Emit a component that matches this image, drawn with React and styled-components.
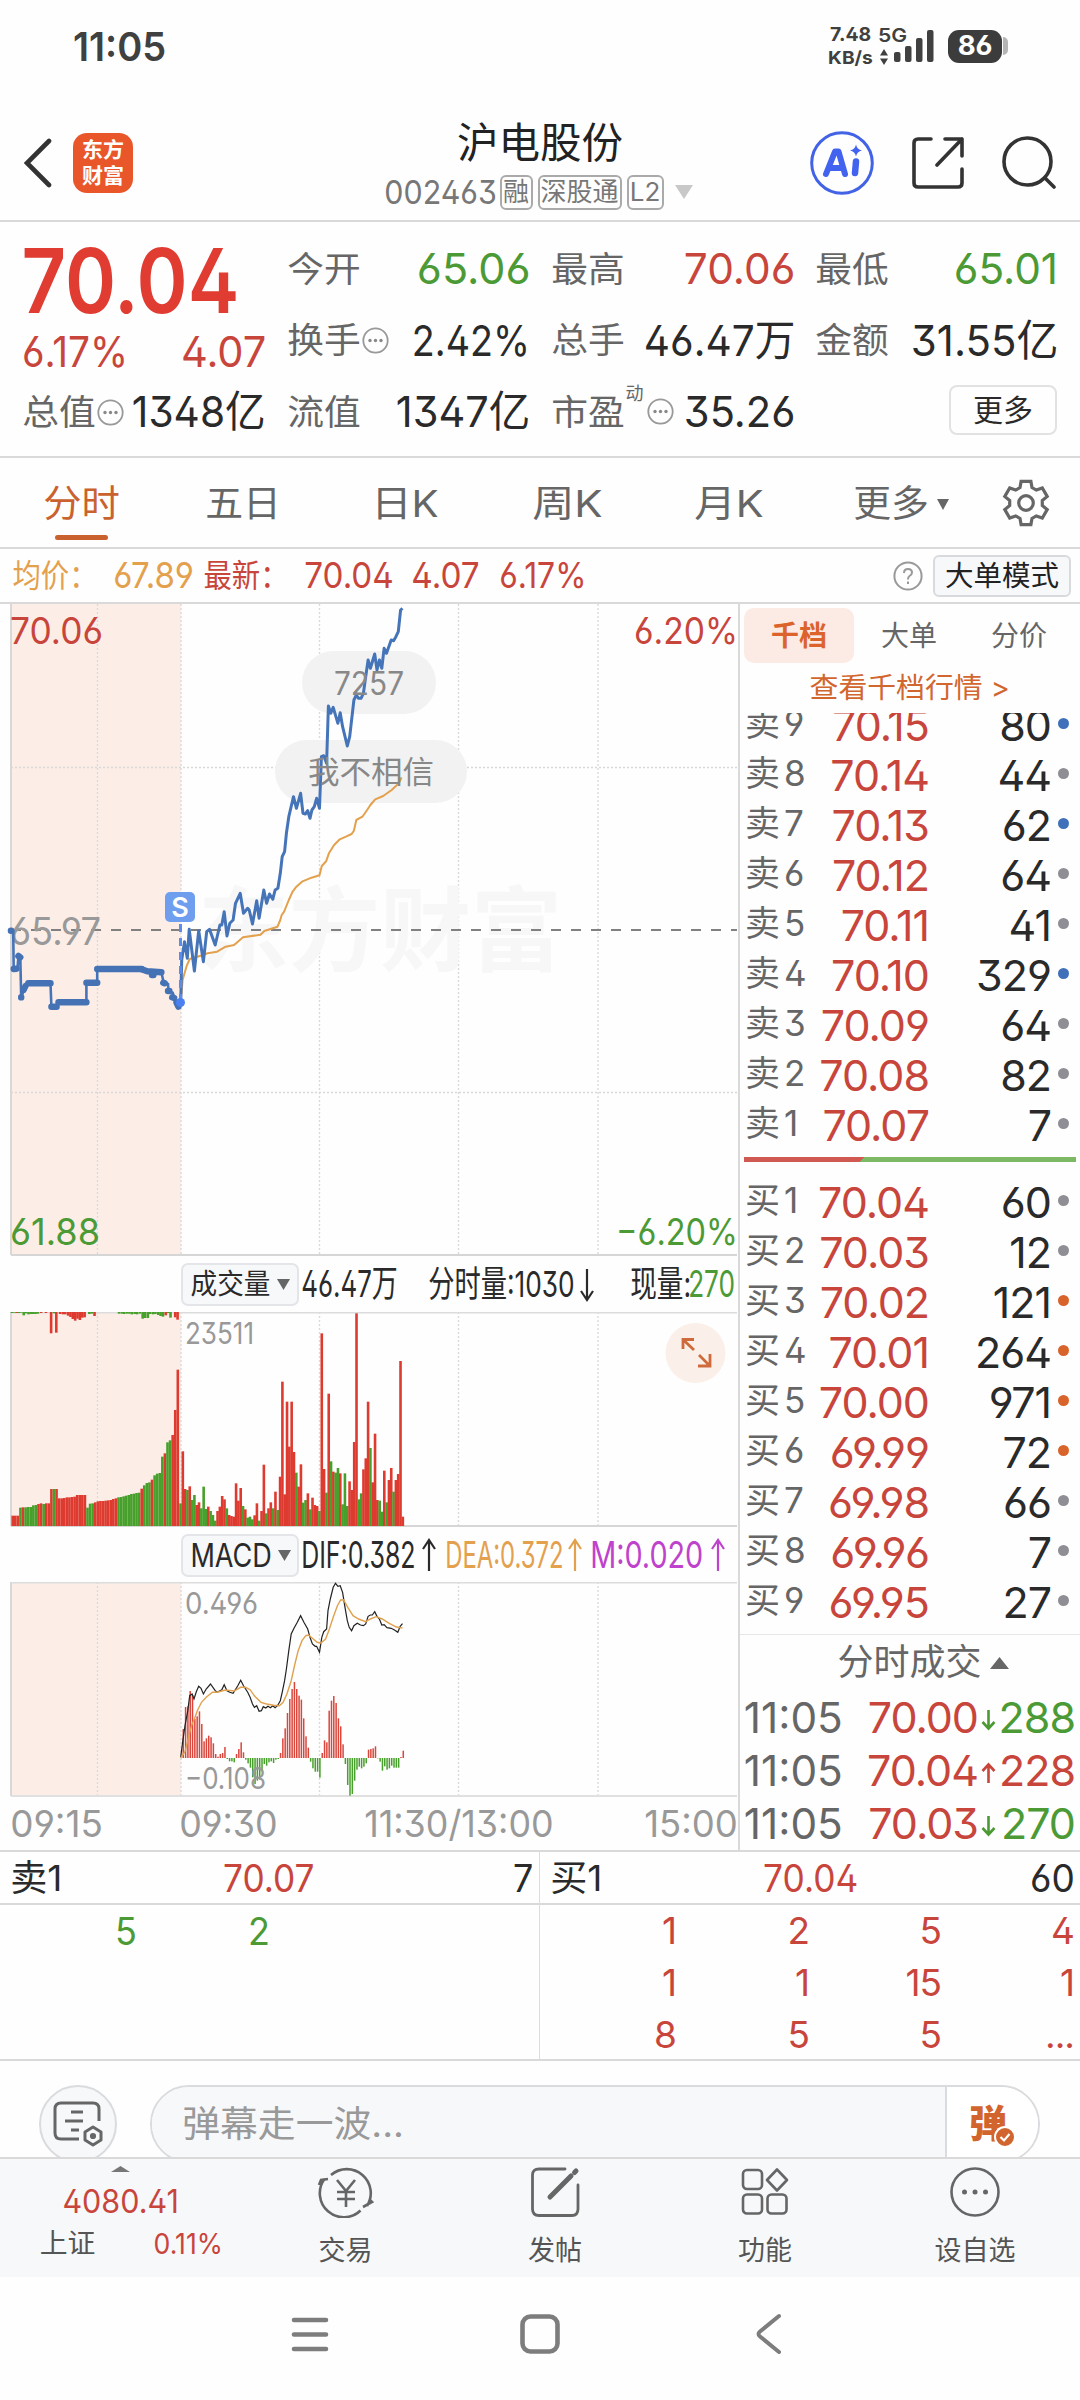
import React, { useLayoutEffect, useRef, useState } from "react";
import styled, { createGlobalStyle } from "styled-components";

const RED = "#c8453c";
const GREEN = "#4c9a35";
const ORANGE = "#c9622f";
const GREY = "#666666";
const INK = "#2a2a2a";
const LINE = "#d9d9d9";
const FONT = `Inter, "Noto Sans CJK SC", sans-serif`;

const Global = createGlobalStyle`
  * { box-sizing: border-box; }
  body { margin: 0; background: #fefefe; }
  svg { display: block; flex: none; }
`;

const Page = styled.div`
  width: 1080px;
  height: 2400px;
  overflow: hidden;
  display: flex;
  flex-direction: column;
  background: #fefefe;
  font-family: ${FONT};
  font-feature-settings: "ss01" 1;
  font-weight: 380;
  color: ${INK};
  line-height: 1;
`;

/* Text squeezed or stretched horizontally to a given width */
const FitBox = styled.span`
  display: block;
  flex: none;
  width: ${(p) => p.$w}px;
  margin-left: ${(p) => p.$ml || 0}px;
  margin-top: ${(p) => p.$mt || 0}px;
  font-size: ${(p) => p.$s}px;
  font-weight: ${(p) => p.$b || 380};
  color: ${(p) => p.$c || "inherit"};
  white-space: nowrap;
  line-height: 1.1;
`;
const FitInner = styled.span`
  display: inline-block;
  transform-origin: 0 50%;
`;
function Fit({ w, s, c, b, ml, mt, children }) {
  const ref = useRef(null);
  const [k, setK] = useState(1);
  useLayoutEffect(() => {
    setK((w + s * 0.1) / ref.current.offsetWidth);
  }, [w, s]);
  return (
    <FitBox $w={w} $s={s} $c={c} $b={b} $ml={ml} $mt={mt}>
      <FitInner ref={ref} style={{ transform: `translateX(${-s * 0.05}px) scaleX(${k})` }}>
        {children}
      </FitInner>
    </FitBox>
  );
}

const Text = styled.span`
  font-size: ${(p) => p.$s}px;
  color: ${(p) => p.$c || "inherit"};
  font-weight: ${(p) => p.$b || 380};
  letter-spacing: ${(p) => p.$ls || 0}px;
  white-space: nowrap;
  line-height: 1.1;
`;

/* ---------- status bar ---------- */
const StatusBar = styled.div`
  height: 92px;
  padding: 1px 72px 0 75px;
  display: flex;
  justify-content: space-between;
  align-items: center;
  color: #404040;
`;
const StatusRight = styled.div`
  display: flex;
  align-items: center;
  margin-top: -1px;
`;
const Speed = styled.div`
  display: flex;
  flex-direction: column;
  gap: 2px;
  margin-right: 7px;
`;
const NetKind = styled.div`
  display: flex;
  flex-direction: column;
  gap: 2px;
`;
const SignalBars = styled.svg`
  margin-left: -13px;
`;
const Battery = styled.div`
  width: 54px;
  height: 33px;
  margin-left: 14px;
  border-radius: 11px;
  background: #3c3c3c;
  color: #fff;
  display: flex;
  align-items: center;
  justify-content: center;
`;
const BatteryTip = styled.div`
  width: 5px;
  height: 18px;
  margin-left: 1px;
  border-radius: 0 5px 5px 0;
  background: #b5b5b5;
`;

/* ---------- header ---------- */
const Header = styled.header`
  height: 130px;
  border-bottom: 2px solid ${LINE};
  padding: 13px 24px 0 24px;
  display: flex;
  align-items: center;
  justify-content: space-between;
`;
const HeaderSide = styled.div`
  width: 300px;
  display: flex;
  align-items: center;
  justify-content: ${(p) => (p.$end ? "flex-end" : "flex-start")};
  gap: ${(p) => p.$gap}px;
`;
const Logo = styled.div`
  width: 60px;
  height: 60px;
  border-radius: 14px;
  background: #e9562a;
  color: #fff;
  display: flex;
  flex-direction: column;
  align-items: center;
  justify-content: center;
  font-weight: 700;
  font-size: 21px;
  line-height: 26px;
`;
const TitleBlock = styled.div`
  display: flex;
  flex-direction: column;
  align-items: center;
  gap: 8px;
  margin-top: 6px;
`;
const CodeRow = styled.div`
  display: flex;
  align-items: center;
  gap: 5px;
  margin-left: -2px;
  color: #777;
`;
const Tag = styled.span`
  height: 35px;
  width: ${(p) => p.$w}px;
  border: 2px solid #aaa;
  border-radius: 6px;
  font-size: 26px;
  display: flex;
  align-items: center;
  justify-content: center;
  white-space: nowrap;
`;
const Caret = styled.div`
  margin-left: 6px;
`;

/* ---------- quote summary ---------- */
const Quote = styled.section`
  height: 236px;
  border-bottom: 2px solid ${LINE};
  padding: 11px 22px 0 24px;
  display: flex;
  gap: 25px;
`;
const QuoteLeft = styled.div`
  width: 240px;
  display: flex;
  flex-direction: column;
`;
const QuoteLine = styled.div`
  height: ${(p) => p.$h}px;
  display: flex;
  align-items: center;
  justify-content: space-between;
`;
const Stats = styled.div`
  display: grid;
  grid-template-columns: 239px 240px 239px;
  grid-template-rows: repeat(3, 71.5px);
  column-gap: 24.5px;
`;
const Stat = styled.div`
  display: flex;
  align-items: center;
  justify-content: space-between;
`;
const StatLabel = styled.div`
  display: flex;
  align-items: center;
  gap: 3px;
  color: ${GREY};
`;
const Sup = styled.span`
  font-size: 18px;
  align-self: flex-start;
  margin: -8px 0 0 0;
`;
const MoreButton = styled.div`
  width: 108px;
  height: 50px;
  margin: 9px -1px 0 auto;
  border: 2px solid #e2e2e2;
  border-radius: 8px;
  display: flex;
  align-items: center;
  justify-content: center;
`;

/* ---------- period tabs ---------- */
const Tabs = styled.nav`
  height: 91px;
  border-bottom: 2px solid ${LINE};
  display: flex;
`;
const Tab = styled.div`
  width: 162px;
  padding-top: 26px;
  padding-left: ${(p) => p.$pl || 0}px;
  display: flex;
  flex-direction: column;
  align-items: center;
  gap: 10px;
  color: ${(p) => (p.$on ? ORANGE : GREY)};
`;
const TabName = styled.div`
  display: flex;
  align-items: center;
  gap: 10px;
`;
const TabMark = styled.div`
  width: 53px;
  height: 5px;
  border-radius: 3px;
  background: ${ORANGE};
`;
const GearCell = styled.div`
  width: 108px;
  display: flex;
  align-items: center;
  justify-content: center;
`;

/* ---------- info line ---------- */
const Info = styled.div`
  height: 55px;
  border-bottom: 2px solid ${LINE};
  padding: 1px 9px 0 14px;
  display: flex;
  align-items: center;
`;
const Spring = styled.div`
  flex: 1;
`;
const ModeButton = styled.div`
  width: 138px;
  height: 42px;
  margin-left: 10px;
  border: 2px solid #d8dadd;
  border-radius: 6px;
  background: #f7f8fa;
  display: flex;
  align-items: center;
  justify-content: center;
`;

/* ---------- body ---------- */
const Body = styled.main`
  height: 1248px;
  border-bottom: 2px solid ${LINE};
  display: flex;
`;
const ChartCol = styled.div`
  width: 740px;
  border-right: 2px solid ${LINE};
  display: flex;
  flex-direction: column;
`;
const IndicatorBar = styled.div`
  height: ${(p) => p.$h}px;
  padding: 2px 0 0 181px;
  display: flex;
  align-items: center;
`;
const Picker = styled.div`
  width: 118px;
  height: 43px;
  border: 2px solid #e3e5e8;
  border-radius: 7px;
  background: #f7f8fa;
  display: flex;
  align-items: center;
  padding-left: 9px;
  gap: 8px;
`;
const TimeAxis = styled.div`
  height: 53px;
  padding: 2px 0 0 12px;
  display: flex;
  align-items: center;
  color: #999;
`;

const BookCol = styled.aside`
  width: 340px;
  display: flex;
  flex-direction: column;
`;
const BookTabs = styled.div`
  padding: 4px 4px 0;
  display: flex;
`;
const BookTab = styled.div`
  width: 110px;
  height: 55px;
  border-radius: 10px;
  background: ${(p) => (p.$on ? "#fbebe4" : "transparent")};
  color: ${(p) => (p.$on ? "#dc632c" : GREY)};
  font-size: 28px;
  font-weight: ${(p) => (p.$on ? 700 : 380)};
  display: flex;
  align-items: center;
  justify-content: center;
`;
const BookLink = styled.div`
  height: 52px;
  padding: 0 2px 0 0;
  color: #d2662f;
  display: flex;
  align-items: center;
  justify-content: center;
`;
const SellList = styled.div`
  height: 444px;
  flex: none;
  overflow: hidden;
  display: flex;
  flex-direction: column;
  justify-content: flex-end;
  padding-bottom: 6px;
`;
const BuyList = styled.div`
  padding-top: 16px;
  height: 472px;
  flex: none;
`;
const Level = styled.div`
  height: 50px;
  flex: none;
  display: flex;
  align-items: center;
  padding: 0 11px 0 5px;
`;
const LevelName = styled.div`
  width: 65px;
  font-size: 35px;
  margin-top: -5px;
  color: ${GREY};
  display: flex;
  align-items: center;
  gap: 4px;
`;
const PriceCell = styled.div`
  width: 118px;
  display: flex;
  justify-content: flex-end;
`;
const QtyCell = styled.div`
  flex: 1;
  display: flex;
  justify-content: flex-end;
`;
const Num = styled.span`
  font-size: ${(p) => p.$s || 43}px;
  letter-spacing: ${(p) => p.$ls ?? -1}px;
  margin-right: ${(p) => p.$ls ?? -1}px;
  color: ${(p) => p.$c || INK};
  line-height: 1.1;
`;
const Dot = styled.i`
  width: 11px;
  height: 11px;
  margin: -6px 0 0 8px;
  border-radius: 50%;
  background: ${(p) => p.$c};
`;
const Balance = styled.div`
  height: 5px;
  flex: none;
  margin: 0 4px 0 4px;
  background: linear-gradient(135deg, #d05a52 0 85px, #7db965 85.5px);
`;
const TradesHead = styled.div`
  height: 57px;
  flex: none;
  border-top: 1px solid #e6e6e6;
  display: flex;
  align-items: center;
  justify-content: center;
  padding-left: 26px;
  gap: 8px;
  color: ${GREY};
`;
const Trade = styled.div`
  height: 53px;
  flex: none;
  display: flex;
  align-items: center;
  padding: 0 6px 0 6px;
`;
const TradePrice = styled.div`
  flex: 1;
  display: flex;
  justify-content: flex-end;
`;
const TradeQty = styled.div`
  width: 78px;
  display: flex;
  justify-content: flex-end;
`;

/* ---------- queue table ---------- */
const Queues = styled.section`
  height: 209px;
  border-bottom: 2px solid ${LINE};
  display: flex;
`;
const Queue = styled.div`
  width: 540px;
  border-right: ${(p) => (p.$line ? "1px solid #dcdcdc" : "none")};
`;
const QueueHead = styled.div`
  height: 53px;
  border-bottom: 2px solid ${LINE};
  padding: 2px 7px 0 12px;
  display: grid;
  grid-template-columns: 213px 92px 1fr;
  align-items: center;
`;
const QueueRow = styled.div`
  height: 52px;
  padding: 1px 7px 0 0;
  display: grid;
  grid-template-columns: 135px 133px 132px 133px;
  align-items: center;
  justify-items: end;
`;
const Right = styled.div`
  justify-self: end;
`;

/* ---------- comment input ---------- */
const Compose = styled.section`
  height: 96px;
  overflow: hidden;
  padding: 24px 40px 0 39px;
  display: flex;
  gap: 33px;
`;
const RoundButton = styled.div`
  width: 78px;
  height: 78px;
  flex: none;
  border: 2px solid #d9dbde;
  border-radius: 50%;
  background: #f7f8fa;
  display: flex;
  align-items: center;
  justify-content: center;
`;
const Pill = styled.div`
  flex: 1;
  height: 78px;
  border: 2px solid #d9dbde;
  border-radius: 40px;
  overflow: hidden;
  display: flex;
`;
const PillText = styled.div`
  flex: 1;
  background: #f7f8fa;
  padding: 1px 0 0 32px;
  display: flex;
  align-items: center;
  color: #999;
`;
const Danmu = styled.div`
  width: 93px;
  border-left: 2px solid #d9dbde;
  background: #fff;
  padding: 0 0 0 22px;
  display: flex;
  align-items: center;
  color: #d2642e;
`;
const DanmuBadge = styled.div`
  margin: 26px 0 0 -13px;
`;

/* ---------- bottom bars ---------- */
const Bottom = styled.footer`
  height: 120px;
  flex: none;
  background: #f7f8fa;
  border-top: 2px solid ${LINE};
  display: flex;
`;
const IndexCell = styled.div`
  width: 241px;
  padding-top: 7px;
  display: flex;
  flex-direction: column;
  align-items: center;
`;
const IndexRow = styled.div`
  width: 180px;
  margin: 9px 0 0 21px;
  display: flex;
  justify-content: space-between;
  align-items: center;
  color: #555;
`;
const Action = styled.div`
  width: ${(p) => p.$w}px;
  padding-top: 7px;
  display: flex;
  flex-direction: column;
  align-items: center;
  gap: 18px;
  color: #555;
`;
const SystemNav = styled.div`
  flex: 1;
  display: flex;
  justify-content: center;
  gap: 190px;
  padding-top: 34px;
`;

/* ---------- small drawings ---------- */
const Tri = ({ w, h, c, up }) => (
  <svg width={w} height={h} viewBox="0 0 10 10" preserveAspectRatio="none">
    <path d={up ? "M0 10L5 0L10 10Z" : "M0 0H10L5 10Z"} fill={c} />
  </svg>
);
const Dots3 = () => (
  <svg width="27" height="27" viewBox="0 0 27 27">
    <circle cx="13.5" cy="13.5" r="12.2" fill="none" stroke="#999" strokeWidth="1.8" />
    <g fill="#888">
      <circle cx="8" cy="13.5" r="1.7" />
      <circle cx="13.5" cy="13.5" r="1.7" />
      <circle cx="19" cy="13.5" r="1.7" />
    </g>
  </svg>
);
const TickArrow = ({ up }) => (
  <svg width="15" height="22" viewBox="0 0 15 22" fill="none" strokeWidth="2.6" stroke={up ? RED : GREEN}>
    <path d={up ? "M7.5 21V3M1.5 9L7.5 2.5L13.5 9" : "M7.5 1V19M1.5 13L7.5 19.5L13.5 13"} />
  </svg>
);
const LongArrow = ({ up, c }) => (
  <svg width="14" height="34" viewBox="0 0 14 34" fill="none" stroke={c} strokeWidth="2.2">
    <path d={up ? "M7 33V3M1 11L7 2L13 11" : "M7 1V31M1 23L7 32L13 23"} />
  </svg>
);
const GEAR = [0, 1, 2, 3, 4, 5]
  .flatMap((n) => {
    const a = (n * Math.PI) / 3;
    return [[-6, -15.4], [-4.9, -21.6], [4.9, -21.6], [6, -15.4]].map(
      ([x, y]) =>
        `${(24 + x * Math.cos(a) - y * Math.sin(a)).toFixed(1)} ${(24 + x * Math.sin(a) + y * Math.cos(a)).toFixed(1)}`
    );
  })
  .join("L");
const Gear = () => (
  <svg width="48" height="48" viewBox="0 0 48 48" fill="none" stroke="#666" strokeWidth="3.2">
    <path d={`M${GEAR}Z`} />
    <circle cx="24" cy="24" r="7.3" />
  </svg>
);

/* ---------- chart data ---------- */
const KX = 0.4719;
const toPath = (pts, dy) => {
  const n = pts.trim().split(/\s+/).map((p) => p.split(",").map(Number));
  return n.map(([x, y], i) => `${i ? "L" : "M"}${(x * KX).toFixed(1)} ${(y / 3 - dy).toFixed(1)}`).join("");
};
const AUCTION_LINE =
  "23,1022 28,1024 29,1137 37,1135 39,1100 43,1105 45,1222 52,1195 58,1180 107,1180 109,1250 120,1250 124,1237 183,1237 183,1178 206,1178 206,1137 300,1137 320,1145 324,1155 342,1147 347,1178 356,1182 357,1203 366,1208 370,1225 378,1250 383,1237";
const AUCTION_DOTS = [
  "23,1022 24,1022", "29,1137 35,1136", "39,1098 43,1102", "45,1222 45,1222.1", "50,1200 54,1188", "60,1180 107,1180",
  "109,1250 120,1250", "124,1237 183,1237", "183,1178 206,1178", "206,1137 300,1137", "300,1138 312,1144 342,1147",
  "322,1155 325,1155", "346,1178 349,1180", "356,1203 359,1203", "365,1222 369,1224", "374,1238 378,1250",
];
const PRICE_LINE =
  "383,1237 385,1110 391,1055 397,1105 401,1018 412,1143 421,1022 431,1115 438,1025 444,1018 456,1065 466,1005 470,1005 475,965 481,1038 487,1000 494,990 499,940 509,910 516,970 525,955 528,960 535,1002 544,932 549,985 559,900 565,940 571,912 578,928 583,900 589,895 594,850 598,800 603,785 607,730 612,680 622,620 628,655 637,610 642,670 647,672 652,662 657,685 661,660 666,650 671,625 677,655 681,500 686,497 692,520 696,348 701,370 706,352 716,400 721,368 726,410 736,468 741,440 750,330 755,315 760,325 765,325 770,310 775,260 780,210 785,235 794,192 799,240 804,210 809,235 814,175 819,190 829,150 834,152 839,140 844,125 849,60 853,55";
const AVG_LINE =
  "383,1237 387,1170 395,1130 402,1107 425,1097 440,1090 460,1085 478,1070 496,1065 515,1042 552,1034 560,1023 588,1010 594,990 597,975 602,965 612,930 620,905 628,890 640,875 660,863 677,856 682,828 691,814 697,790 708,765 720,748 733,740 745,732 750,722 755,690 768,680 778,660 785,645 795,628 812,618 830,600 845,580 851,562";
const DIF_LINE =
  "383,685 387,640 392,590 398,545 402,500 407,495 411,510 416,488 421,472 426,478 431,495 437,480 446,465 456,485 460,490 470,482 475,467 481,485 487,490 494,493 504,470 510,454 516,470 525,490 530,505 535,525 539,535 544,530 549,547 554,545 558,533 563,537 568,532 573,536 578,530 583,536 588,530 594,515 598,490 603,455 607,420 612,365 617,315 623,298 630,280 637,260 644,280 652,300 657,325 662,345 668,352 671,352 677,370 682,325 686,308 692,300 695,245 700,210 706,175 711,163 716,172 721,170 726,190 731,235 736,275 740,295 745,305 750,290 757,283 764,288 770,290 775,285 780,262 785,258 789,258 794,248 799,262 804,270 809,288 814,287 820,296 829,298 836,303 843,310 848,292 853,284";
const DEA_LINE =
  "383,687 392,668 397,640 402,610 407,585 412,570 418,545 427,520 437,505 450,490 460,490 478,483 496,486 510,475 520,475 530,482 540,502 553,520 565,525 580,529 592,530 600,520 608,495 617,455 625,405 632,365 640,335 648,320 654,318 662,328 672,340 680,342 690,330 698,300 706,265 715,230 722,213 728,212 737,235 748,260 760,270 775,278 785,270 797,263 810,270 825,283 840,294 853,297";

/* colour letter followed by the bar's top */
const PRE_VOL =
  "r797 r797 r797 g773 r772 g772 g771 g771 g766 g765 r762 r760 g762 r760 r760 r717 g717 r717 r745 r745 r744 r742 r742 r741 r740 r735 r735 r735 r735 g773 g761 g760 r757 r754 r753 r753 r752 r751 r750 r747 r745 g742 g741 g739 g737 g735 g732 g731 g729 g728 r716 g706 g699 g697 r689 g676 g671 g669 g620 r610 g577 g571 r555 r480 r359";
const VOL =
  "g760 r604 r717 g720 r709 g750 g735 r765 r757 g775 g710 g777 r770 g783 g795 g812 r783 r770 r738 r748 g775 r795 r798 r800 r700 r752 r714 g768 r778 g803 g800 g808 r796 r760 g812 r783 r644 g790 r775 r757 g775 r725 g780 r680 r395 r733 r455 r590 r455 r606 g668 r710 r643 g758 g750 r730 g778 r743 r765 r768 g783 r250 r657 g728 r431 g634 r665 g668 g654 r670 g763 g670 g768 r694 r720 r576 r190 g748 g730 r658 r625 r455 g594 r697 r551 r750 g752 g785 r662 g757 r690 r654 g725 r690 r672 r333 r800";
const TOP_VOL =
  "23g189 28g188 33r189 38g189 43g188 48g196 53g190 58g193 63g192 68g192 73g192 78g191 85r189 95r189 106r250 112g190 117r248 125r192 131r193 136r193 142r197 147r201 152r207 157r212 162r206 167r210 172r203 177r202 187g192 192g191 198r198 250g191 256g191 261g192 267g191 272g191 277g193 283g192 288g193 294g191 300g206 305g204 311g204 316g192 322g193 327g192 333g195 338g198 343g200 349r196 354g189 359g203 369r202 374r209";
const MACD =
  "687 600 534 532 486 498 570 562 547 585 637 628 620 625 643 675 683 675 672 654 690 697 697 700 675 660 640 670 692 703 716 745 765 755 752 725 705 710 700 697 702 692 690 672 628 598 552 510 480 459 480 500 512 568 622 656 698 718 728 728 746 672 634 640 545 515 501 522 568 592 646 705 768 800 795 755 722 713 718 713 703 662 660 658 652 688 698 725 712 722 718 710 716 716 716 684 665";
const hue = (k) => (k === "r" ? "#de3b30" : "#48a02c");

const Grid = ({ h }) => (
  <g>
    <rect x="11" y="0" width="170" height={h} fill="#fceee7" />
    <path d={`M11 0V${h}`} stroke="#d8d8d8" strokeWidth="2" />
    <path
      d={`M97.5 0V${h}M181 0V${h}M319.5 0V${h}M458.5 0V${h}M598 0V${h}`}
      stroke="#dadada"
      strokeWidth="1.4"
      strokeDasharray="2 2"
    />
  </g>
);
const SvgText = ({ x, y, w, s, c, children, ...rest }) => (
  <text x={x} y={y} textLength={w} lengthAdjust="spacingAndGlyphs" fontSize={s} fill={c} {...rest}>
    {children}
  </text>
);

const PriceChart = () => (
  <svg width="738" height="652">
    <Grid h={651} />
    <path d="M11 163.5H737M11 488.5H737" stroke="#d8d8d8" strokeWidth="1.4" strokeDasharray="2 2" />
    <path d="M11 651H737" stroke="#d6d6d6" strokeWidth="2" />
    <SvgText x="198" y="360" w="364" s="92" c="#f7f7f7" fontWeight="700">东方财富</SvgText>
    <path d="M11 326H737" stroke="#808080" strokeWidth="2" strokeDasharray="10 10" />
    <SvgText x="10" y="340.5" w="91" s="38" c="#999">65.97</SvgText>
    <SvgText x="10" y="39.5" w="93" s="37" c={RED}>70.06</SvgText>
    <SvgText x="634" y="39.5" w="104" s="37" c={RED}>6.20%</SvgText>
    <SvgText x="10" y="641" w="90" s="37" c={GREEN}>61.88</SvgText>
    <SvgText x="616" y="641" w="122" s="37" c={GREEN}>−6.20%</SvgText>
    <rect x="302" y="47" width="134" height="63" rx="31.5" fill="#f2f2f2" />
    <rect x="275" y="136" width="192" height="63" rx="31.5" fill="#f2f2f2" />
    <path d={toPath(AVG_LINE, 14)} fill="none" stroke="#e3a04d" strokeWidth="2" strokeLinejoin="round" />
    <path d={toPath(AUCTION_LINE, 14)} fill="none" stroke="#4574b8" strokeWidth="2.6" />
    {AUCTION_DOTS.map((d) => (
      <path key={d} d={toPath(d, 14)} fill="none" stroke="#4472b4" strokeWidth="6.4" strokeLinecap="round" strokeLinejoin="round" />
    ))}
    <path d={toPath(PRICE_LINE, 14)} fill="none" stroke="#4574b8" strokeWidth="3" strokeLinejoin="round" />
    <SvgText x="334" y="91" w="70" s="32" c="#888">7257</SvgText>
    <SvgText x="308" y="179" w="126" s="31" c="#888">我不相信</SvgText>
    <path d="M180.5 320V398" stroke="#5a8bee" strokeWidth="3" strokeDasharray="8 6" />
    <circle cx="180.5" cy="398.5" r="4.5" fill="#4a80f0" />
    <rect x="165" y="288" width="30" height="30" rx="5" fill="#6f9eef" />
    <text x="180" y="312.5" fontSize="27" fontWeight="600" fill="#fff" textAnchor="middle">S</text>
  </svg>
);

const VolumeChart = () => (
  <svg width="738" height="215">
    <Grid h={214} />
    <path d="M11 .7H737" stroke="#dcdcdc" strokeWidth="1.5" />
    <path d="M11 214H737" stroke="#d6d6d6" strokeWidth="2" />
    {TOP_VOL.split(" ").map((t) => {
      const [, x, k, y] = t.match(/(\d+)([rg])(\d+)/);
      return <rect key={t} x={x * KX - 0.2} y="0" width="2.6" height={y / 3 - 62} fill={hue(k)} />;
    })}
    {PRE_VOL.split(" ").map((t, i) => {
      const y = t.slice(1) / 3 - 62;
      return <rect key={i} x={11.4 + i * 2.58} y={y} width="2.6" height={214 - y} fill={hue(t[0])} />;
    })}
    {VOL.split(" ").map((t, i) => {
      const y = t.slice(1) / 3 - 62;
      return <rect key={i} x={179.2 + i * 2.316} y={y} width="2.6" height={214 - y} fill={hue(t[0])} />;
    })}
    <SvgText x="185" y="32" w="69" s="30" c="#999">23511</SvgText>
    <circle cx="695.5" cy="41" r="30" fill="#fbf0e9" />
    <path
      d="M683 37V27.5H694M683.5 28L694 38M710 42V54H698M709.5 53.5L699 43"
      fill="none"
      stroke="#cf6a3c"
      strokeWidth="2.8"
    />
  </svg>
);

const MacdChart = () => (
  <svg width="738" height="215">
    <Grid h={214} />
    <path d="M11 .7H737" stroke="#dcdcdc" strokeWidth="1.5" />
    <path d="M11 214H737" stroke="#e0e0e0" strokeWidth="2" />
    {MACD.split(" ").map((t, i) => {
      const y = Number(t);
      return (
        <rect
          key={i}
          x={180.2 + i * 2.316}
          y={Math.min(y, 687) / 3 - 53}
          width="1.5"
          height={Math.abs(687 - y) / 3}
          fill={y < 687 ? "#d9463c" : "#48a02c"}
        />
      );
    })}
    <path d={toPath(DIF_LINE, 53)} fill="none" stroke="#222" strokeWidth="1.2" />
    <path d={toPath(DEA_LINE, 53)} fill="none" stroke="#e0a14e" strokeWidth="1.4" />
    <SvgText x="185" y="32" w="73" s="30" c="#999">0.496</SvgText>
    <SvgText x="185" y="207" w="81" s="30" c="#999">−0.108</SvgText>
  </svg>
);

/* ---------- order book data ---------- */
const GREY_DOT = "#8f8e94";
const BLUE_DOT = "#3f70b9";
const ORANGE_DOT = "#d8642b";
const SELLS = [
  [9, "70.15", 80, BLUE_DOT], [8, "70.14", 44, GREY_DOT], [7, "70.13", 62, BLUE_DOT],
  [6, "70.12", 64, GREY_DOT], [5, "70.11", 41, GREY_DOT], [4, "70.10", 329, BLUE_DOT],
  [3, "70.09", 64, GREY_DOT], [2, "70.08", 82, GREY_DOT], [1, "70.07", 7, GREY_DOT],
];
const BUYS = [
  [1, "70.04", 60, GREY_DOT], [2, "70.03", 12, GREY_DOT], [3, "70.02", 121, ORANGE_DOT],
  [4, "70.01", 264, ORANGE_DOT], [5, "70.00", 971, ORANGE_DOT], [6, "69.99", 72, ORANGE_DOT],
  [7, "69.98", 66, GREY_DOT], [8, "69.96", 7, GREY_DOT], [9, "69.95", 27, GREY_DOT],
];
const TRADES = [["70.00", 288, false], ["70.04", 228, true], ["70.03", 270, false]];

const LevelRow = ({ side, data: [n, price, qty, dot] }) => (
  <Level>
    <LevelName><span>{side}</span><span>{n}</span></LevelName>
    <PriceCell><Num $c={RED}>{price}</Num></PriceCell>
    <QtyCell><Num>{qty}</Num></QtyCell>
    <Dot $c={dot} />
  </Level>
);

const StatItem = ({ label, icon, sup, value, w, c }) => (
  <Stat>
    <StatLabel>
      <Fit w={70} s={35}>{label}</Fit>
      {sup && <Sup>{sup}</Sup>}
      {icon && <Dots3 />}
    </StatLabel>
    <Fit w={w} s={43} c={c}>{value}</Fit>
  </Stat>
);

export default function App() {
  return (
    <Page>
      <Global />
      <StatusBar>
        <Fit w={89} s={40} b={600}>11:05</Fit>
        <StatusRight>
          <Speed>
            <Fit w={39} s={19} b={700}>7.48</Fit>
            <Fit w={43} s={18} b={700} ml={-2}>KB/s</Fit>
          </Speed>
          <NetKind>
            <Fit w={27} s={19} b={600}>5G</Fit>
            <svg width="10" height="18" viewBox="0 0 10 18" fill="#404040">
              <path d="M5 1L9 7.5H1ZM5 17L9 10.5H1Z" />
            </svg>
          </NetKind>
          <SignalBars width="41" height="34" viewBox="0 0 41 34" fill="#404040">
            <rect x="1" y="23" width="6.5" height="10" rx="2" />
            <rect x="12" y="17" width="6.5" height="16" rx="2" />
            <rect x="23" y="9" width="6.5" height="24" rx="2" />
            <rect x="34" y="1" width="6.5" height="32" rx="2" />
          </SignalBars>
          <Battery><Fit w={32} s={27} b={700}>86</Fit></Battery>
          <BatteryTip />
        </StatusRight>
      </StatusBar>

      <Header>
        <HeaderSide $gap={21}>
          <svg width="28" height="50" viewBox="0 0 28 50" fill="none" stroke="#333" strokeWidth="4.6" strokeLinecap="round">
            <path d="M25 3L3 25L25 47" />
          </svg>
          <Logo><span>东方</span><span>财富</span></Logo>
        </HeaderSide>
        <TitleBlock>
          <Text $s={41.5} $c="#222">沪电股份</Text>
          <CodeRow>
            <Fit w={109} s={33}>002463</Fit>
            <Tag $w={33}>融</Tag>
            <Tag $w={84}>深股通</Tag>
            <Tag $w={37}>L2</Tag>
            <Caret><Tri w={18} h={14} c="#c8c8c8" /></Caret>
          </CodeRow>
        </TitleBlock>
        <HeaderSide $end $gap={38}>
          <svg width="64" height="64" viewBox="0 0 64 64">
            <circle cx="32" cy="32" r="30.3" fill="none" stroke="#4263e6" strokeWidth="3" />
            <path
              d="M16 43L25 20.5H28.5L35 43M20 37H32"
              fill="none"
              stroke="#4263f0"
              strokeWidth="6"
              strokeLinejoin="round"
              strokeLinecap="round"
            />
            <path d="M46 30.5L45 42" stroke="#4263f0" strokeWidth="6.5" strokeLinecap="round" />
            <path d="M46 13.5Q47 18.5 52 19.5Q47 20.5 46 25.5Q45 20.5 40 19.5Q45 18.5 46 13.5Z" fill="#4263f0" />
          </svg>
          <svg width="52" height="52" viewBox="0 0 52 52" fill="none" stroke="#333" strokeWidth="3.6" strokeLinecap="round" strokeLinejoin="round">
            <path d="M19 2H6Q2 2 2 6V46Q2 50 6 50H46Q50 50 50 46V32M33 2H50V19M50 2L25 28" />
          </svg>
          <svg width="54" height="54" viewBox="0 0 54 54" fill="none" stroke="#333" strokeWidth="3.6" strokeLinecap="round">
            <circle cx="25.5" cy="25.5" r="23.5" />
            <path d="M43 42L52 51" />
          </svg>
        </HeaderSide>
      </Header>

      <Quote>
        <QuoteLeft>
          <QuoteLine $h={94}><Fit w={209} s={90} b={600} c="#e03c32" ml={2}>70.04</Fit></QuoteLine>
          <QuoteLine $h={50}>
            <Fit w={102} s={42} c={RED}>6.17%</Fit>
            <Fit w={81} s={42} c={RED}>4.07</Fit>
          </QuoteLine>
          <QuoteLine $h={70}>
            <StatLabel><Fit w={70} s={35}>总值</Fit><Dots3 /></StatLabel>
            <Fit w={130} s={43}>1348亿</Fit>
          </QuoteLine>
        </QuoteLeft>
        <Stats>
          <StatItem label="今开" value="65.06" w={109} c={GREEN} />
          <StatItem label="最高" value="70.06" w={107} c={RED} />
          <StatItem label="最低" value="65.01" w={100} c={GREEN} />
          <StatItem label="换手" icon value="2.42%" w={114} />
          <StatItem label="总手" value="46.47万" w={147} />
          <StatItem label="金额" value="31.55亿" w={143} />
          <StatItem label="流值" value="1347亿" w={130} />
          <StatItem label="市盈" sup="动" icon value="35.26" w={107} />
          <MoreButton><Text $s={30} $c={INK}>更多</Text></MoreButton>
        </Stats>
      </Quote>

      <Tabs>
        <Tab $on>
          <Fit w={73} s={37}>分时</Fit>
          <TabMark />
        </Tab>
        <Tab><Fit w={72} s={37}>五日</Fit></Tab>
        <Tab><Fit w={64} s={37}>日K</Fit></Tab>
        <Tab><Fit w={67} s={37}>周K</Fit></Tab>
        <Tab><Fit w={66} s={37}>月K</Fit></Tab>
        <Tab $pl={22}>
          <TabName><Fit w={72} s={37}>更多</Fit><Tri w={12} h={11} c={GREY} /></TabName>
        </Tab>
        <GearCell><Gear /></GearCell>
      </Tabs>

      <Info>
        <Fit w={82} s={32} c="#e3a04d">均价：</Fit>
        <Fit w={77} s={36} c="#e3a04d" ml={19}>67.89</Fit>
        <Fit w={82} s={32} c={RED} ml={13}>最新：</Fit>
        <Fit w={86} s={36} c={RED} ml={19}>70.04</Fit>
        <Fit w={65} s={36} c={RED} ml={21}>4.07</Fit>
        <Fit w={84} s={36} c={RED} ml={23}>6.17%</Fit>
        <Spring />
        <svg width="30" height="30" viewBox="0 0 30 30" fill="none" stroke="#999" strokeWidth="2">
          <circle cx="15" cy="15" r="13.6" />
          <path d="M11 12Q11 8 15 8Q19 8 19 11.5Q19 13.5 16.5 15Q15 16 15 18.5M15 20.5V23" />
        </svg>
        <ModeButton><Text $s={28.5} $c="#222">大单模式</Text></ModeButton>
      </Info>

      <Body>
        <ChartCol>
          <PriceChart />
          <IndicatorBar $h={56}>
            <Picker><Fit w={77} s={28}>成交量</Fit><Tri w={13} h={11} c={GREY} /></Picker>
            <Fit w={93} s={37} ml={4}>46.47万</Fit>
            <Fit w={143} s={36} ml={34}>分时量:1030</Fit>
            <FitBox $w={14} $ml={7}><LongArrow c={INK} /></FitBox>
            <Fit w={57} s={36} ml={38}>现量:</Fit>
            <Fit w={43} s={37} ml={1} c={GREEN}>270</Fit>
          </IndicatorBar>
          <VolumeChart />
          <IndicatorBar $h={56}>
            <Picker><Fit w={78} s={32}>MACD</Fit><Tri w={13} h={11} c={GREY} /></Picker>
            <Fit w={111} s={37} ml={4}>DIF:0.382</Fit>
            <FitBox $w={14} $ml={8}><LongArrow up c={INK} /></FitBox>
            <Fit w={115} s={37} ml={11} c="#e3a04d">DEA:0.372</Fit>
            <FitBox $w={14} $ml={6}><LongArrow up c="#e3a04d" /></FitBox>
            <Fit w={109} s={37} ml={10} c="#bf42cc">M:0.020</Fit>
            <FitBox $w={14} $ml={10}><LongArrow up c="#bf42cc" /></FitBox>
          </IndicatorBar>
          <MacdChart />
          <TimeAxis>
            <Fit w={89} s={37}>09:15</Fit>
            <Fit w={95} s={37} ml={80}>09:30</Fit>
            <Fit w={186} s={37} ml={90}>11:30/13:00</Fit>
            <Fit w={90} s={37} ml={94}>15:00</Fit>
          </TimeAxis>
        </ChartCol>

        <BookCol>
          <BookTabs>
            <BookTab $on>千档</BookTab>
            <BookTab>大单</BookTab>
            <BookTab>分价</BookTab>
          </BookTabs>
          <BookLink><Fit w={197} s={28}>查看千档行情 &gt;</Fit></BookLink>
          <SellList>
            {SELLS.map((d) => <LevelRow key={d[0]} side="卖" data={d} />)}
          </SellList>
          <Balance />
          <BuyList>
            {BUYS.map((d) => <LevelRow key={d[0]} side="买" data={d} />)}
          </BuyList>
          <TradesHead><Text $s={36}>分时成交</Text><Tri w={19} h={12} c={GREY} up /></TradesHead>
          {TRADES.map(([price, qty, up]) => (
            <Trade key={price}>
              <Fit w={95} s={43} c={GREY}>11:05</Fit>
              <TradePrice><Num $c={RED}>{price}</Num></TradePrice>
              <FitBox $w={15} $ml={4} $mt={4}><TickArrow up={up} /></FitBox>
              <TradeQty><Num $c={up ? RED : GREEN}>{qty}</Num></TradeQty>
            </Trade>
          ))}
        </BookCol>
      </Body>

      <Queues>
        <Queue $line>
          <QueueHead>
            <Fit w={49} s={36}>卖1</Fit>
            <Fit w={88} s={38} c={RED}>70.07</Fit>
            <Right><Fit w={17} s={38}>7</Fit></Right>
          </QueueHead>
          <QueueRow><Fit w={18} s={38} c={GREEN}>5</Fit><Fit w={18} s={38} c={GREEN}>2</Fit></QueueRow>
        </Queue>
        <Queue>
          <QueueHead>
            <Fit w={49} s={36}>买1</Fit>
            <Fit w={91} s={38} c={RED}>70.04</Fit>
            <Right><Fit w={41} s={38}>60</Fit></Right>
          </QueueHead>
          {[["1", "2", "5", "4"], ["1", "1", "15", "1"], ["8", "5", "5", "..."]].map((r, i) => (
            <QueueRow key={i}>
              {r.map((v, j) => <Num key={j} $s={37} $ls={-1} $c={RED}>{v}</Num>)}
            </QueueRow>
          ))}
        </Queue>
      </Queues>

      <Compose>
        <RoundButton>
          <svg width="50" height="46" viewBox="0 0 50 46" fill="none" stroke="#666" strokeWidth="3" strokeLinejoin="round">
            <path d="M26 38H8Q2 38 2 32V8Q2 2 8 2H40Q46 2 46 8V20" />
            <path d="M18 11H30M12 20H30M18 29H26" />
            <path d="M40 26L48 31V39L40 44L32 39V31Z" />
            <circle cx="40" cy="35" r="1.6" fill="#666" />
          </svg>
        </RoundButton>
        <Pill>
          <PillText><Fit w={218} s={36}>弹幕走一波...</Fit></PillText>
          <Danmu>
            <Text $s={38} $b={900}>弹</Text>
            <DanmuBadge>
              <svg width="22" height="22" viewBox="0 0 22 22">
                <circle cx="11" cy="11" r="10" fill="#d2642e" stroke="#fff" strokeWidth="2" />
                <path d="M6.5 11L10 14.5L15.5 8" fill="none" stroke="#fff" strokeWidth="2.2" />
              </svg>
            </DanmuBadge>
          </Danmu>
        </Pill>
      </Compose>

      <Bottom>
        <IndexCell>
          <Tri w={19} h={6} c="#777" up />
          <Fit w={113} s={32} c={RED} mt={12}>4080.41</Fit>
          <IndexRow>
            <Fit w={53} s={27}>上证</Fit>
            <Fit w={66} s={29} c={RED}>0.11%</Fit>
          </IndexRow>
        </IndexCell>
        <Action $w={209}>
          <svg width="58" height="52" viewBox="0 0 58 52" fill="none" stroke="#666" strokeWidth="2.6">
            <path d="M14 9A24 24 0 0 1 50 40M52 33L55 36L46 41M43.5 44.5A24 24 0 0 1 7.5 13M2 19L4 14L11 13" />
            <path d="M20 14L29 25L38 14M29 25V41M20 26H38M20 33H38" />
          </svg>
          <Text $s={27}>交易</Text>
        </Action>
        <Action $w={210}>
          <svg width="50" height="52" viewBox="0 0 50 52" fill="none" stroke="#666" strokeWidth="2.8" strokeLinecap="round">
            <path d="M35 3H9Q2.5 3 2.5 9V43Q2.5 49.5 9 49.5H42Q48 49.5 48 43V19" />
            <path d="M20 31L41 10" strokeWidth="5" />
            <path d="M44.5 6.5L46 5" strokeWidth="5" />
          </svg>
          <Text $s={27}>发帖</Text>
        </Action>
        <Action $w={210}>
          <svg width="48" height="52" viewBox="0 0 48 52" fill="none" stroke="#666" strokeWidth="2.6">
            <rect x="2" y="4" width="19" height="19" rx="4" />
            <rect x="2" y="28.5" width="19" height="19" rx="4" />
            <rect x="26.5" y="28.5" width="19" height="19" rx="4" />
            <path d="M36 3.5L46 14L36 24.5L26 14Z" strokeLinejoin="round" />
          </svg>
          <Text $s={27}>功能</Text>
        </Action>
        <Action $w={210}>
          <svg width="52" height="52" viewBox="0 0 52 52">
            <circle cx="26" cy="26" r="23.5" fill="none" stroke="#666" strokeWidth="2.6" />
            <circle cx="15.5" cy="26" r="2.5" fill="#666" />
            <circle cx="26" cy="26" r="2.5" fill="#666" />
            <circle cx="36.5" cy="26" r="2.5" fill="#666" />
          </svg>
          <Text $s={27}>设自选</Text>
        </Action>
      </Bottom>

      <SystemNav>
        <svg width="40" height="46" viewBox="0 0 40 46" stroke="#7d7d7d" strokeWidth="4.6" strokeLinecap="round">
          <path d="M4 9H36M4 23.5H36M4 38H36" />
        </svg>
        <svg width="40" height="46" viewBox="0 0 40 46" fill="none" stroke="#7d7d7d" strokeWidth="4.6">
          <rect x="2.5" y="5.5" width="35" height="35" rx="8" />
        </svg>
        <svg width="40" height="46" viewBox="0 0 40 46" fill="none" stroke="#7d7d7d" strokeWidth="4" strokeLinecap="round">
          <path d="M29 5L10 20.5Q7 23 10 25.5L29 41" />
        </svg>
      </SystemNav>
    </Page>
  );
}
